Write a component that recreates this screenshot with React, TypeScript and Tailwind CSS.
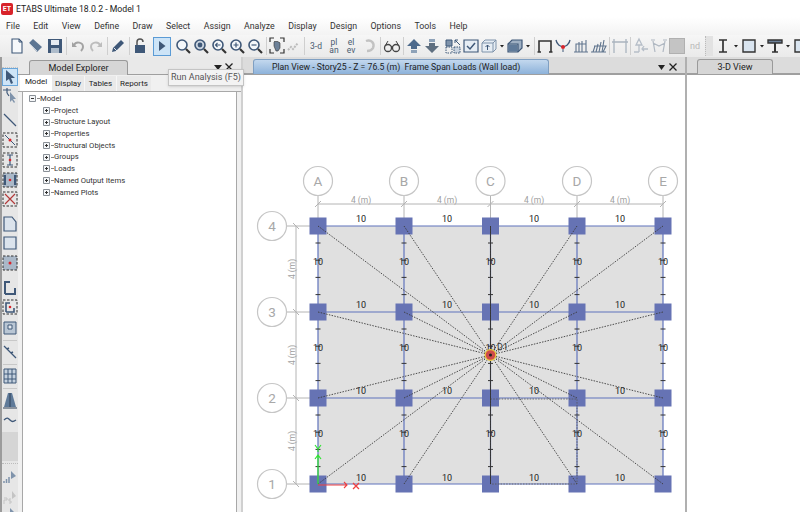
import type { ReactNode } from 'react'

const menus = ['File', 'Edit', 'View', 'Define', 'Draw', 'Select', 'Assign', 'Analyze', 'Display', 'Design', 'Options', 'Tools', 'Help']
const treeItems = ['Project', 'Structure Layout', 'Properties', 'Structural Objects', 'Groups', 'Loads', 'Named Output Items', 'Named Plots']

const xs = [318, 404, 490.5, 577, 663]
const ys = [226, 312, 398, 484]
const cols = ['A', 'B', 'C', 'D', 'E']
const rows = ['4', '3', '2', '1']
const cx = 490.5
const cy = 355

const navy = '#3f5878'
const mid = '#7f93ab'
const light = '#c9d3df'
const dim = '#b4b4b4'

const Ico = ({ w = 18, children }: { w?: number; children: ReactNode }) => (
  <svg width={w} height="18" viewBox={`0 0 ${w} 18`} className="shrink-0" fill="none">
    {children}
  </svg>
)

const Sep = ({ w, line = true }: { w: number; line?: boolean }) => (
  <div className="h-[18px] shrink-0 flex justify-center" style={{ width: w }}>
    {line && <div className="w-px h-full bg-[#cfcfcf]" />}
  </div>
)

const Drop = () => (
  <Ico w={8}>
    <path d="M2 8h4l-2 2.5z" fill="#222" />
  </Ico>
)

const Zoom = ({ sign }: { sign?: string }) => (
  <Ico>
    <circle cx="8" cy="8" r="5" stroke={navy} strokeWidth="1.6" fill={sign === 'w' ? light : '#f4f7fa'} />
    <path d="M12 12l4 4" stroke="#333" strokeWidth="2.2" />
    {sign === '+' && <path d="M5.5 8h5M8 5.5v5" stroke={navy} strokeWidth="1.2" />}
    {sign === '-' && <path d="M5.5 8h5" stroke={navy} strokeWidth="1.2" />}
    {sign === 'b' && <path d="M10.5 8h-5M7.5 6l-2 2 2 2" stroke={navy} strokeWidth="1.1" />}
    {sign === 'w' && <circle cx="8" cy="8" r="2.4" fill={navy} />}
  </Ico>
)

const CloseX = () => (
  <svg width="8" height="8" viewBox="0 0 8 8">
    <path d="M.5.5l7 7M7.500.5l-7 7" stroke="#222" strokeWidth="1.300" />
  </svg>
)

const TextIcon = ({ t, w = 18 }: { t: string; w?: number }) => (
  <div className="h-[18px] shrink-0 flex items-center justify-center text-[8.500px] leading-[8px] text-center text-[#4a5b70]" style={{ width: w }}>
    {t}
  </div>
)

const TopToolbar = () => (
  <div className="h-[22px] flex items-center pl-[8px] bg-gradient-to-b from-[#f6f6f6] to-[#eaeaea] overflow-hidden">
    <Ico>
      <path d="M4 2h7l3 3v11H4z" fill="#f7f9fb" stroke={navy} strokeWidth="1.1" />
      <path d="M11 2v3h3" stroke={navy} />
    </Ico>
    <Ico>
      <path d="M3 6l4-4 9 8-5 5z" fill="#5d7693" />
      <path d="M3 6l8 8" stroke="#c5d0dc" />
    </Ico>
    <Sep w={2} line={false} />
    <Ico>
      <path d="M2 2h14v14H2z" fill={navy} />
      <path d="M5 3h8v5H5z" fill="#e6ebf1" />
      <path d="M5 11h8v5H5z" fill="#aebccb" />
    </Ico>
    <Sep w={5} />
    <Ico>
      <path d="M5 8c2-4 9-3 9 2 0 2-1 3-2 4" stroke="#a3a3a3" strokeWidth="2" />
      <path d="M3 5v5h5z" fill="#a3a3a3" />
    </Ico>
    <Ico>
      <path d="M13 8c-2-4-9-3-9 2 0 2 1 3 2 4" stroke="#bdbdbd" strokeWidth="2" />
      <path d="M15 5v5h-5z" fill="#bdbdbd" />
    </Ico>
    <Sep w={4} />
    <Ico>
      <path d="M3 15l1-4 8-8 3 3-8 8z" fill={navy} />
      <path d="M5 11l3 3" stroke="#dfe5ec" />
    </Ico>
    <Sep w={4} />
    <Ico>
      <path d="M6 8V5a3 3 0 0 1 6 0" stroke="#555" strokeWidth="1.5" />
      <path d="M4 8h10v8H4z" fill={navy} />
    </Ico>
    <Sep w={4} line={false} />
    <div className="w-[18px] h-[19px] shrink-0 bg-[#cde4f7] border border-[#5b9bd5] flex items-center justify-center">
      <svg width="8" height="10" viewBox="0 0 8 10">
        <path d="M1 0l6.500 5L1 10z" fill="#3f5878" />
      </svg>
    </div>
    <Sep w={3} line={false} />
    <Zoom sign="z" />
    <Zoom sign="w" />
    <Zoom sign="b" />
    <Zoom sign="+" />
    <Zoom sign="-" />
    <Sep w={5} />
    <Ico w={16}>
      <path d="M1 5V1h4M11 1h4v4M1 12v4h4M15 12v4h-4" stroke="#333" strokeWidth="1.2" />
      <path d="M5 9V5l1-1 1 1 1-1 1 1 1 0 1 1v5l-2 3H7z" fill="#6d8198" stroke="#333" strokeWidth=".6" />
    </Ico>
    <Ico w={16}>
      <path d="M3 13l3-3 2 2 5-6" stroke="#bbb" strokeWidth="2" strokeDasharray="2 1" />
    </Ico>
    <Sep w={6} />
    <TextIcon t="3-d" />
    <div className="w-[2px] shrink-0" />
    <TextIcon t="pl an" w={14} />
    <div className="w-[3px] shrink-0" />
    <TextIcon t="el ev" w={14} />
    <div className="w-[2px] shrink-0" />
    <Ico>
      <path d="M6 4c5-2 9 2 7 7-1 2-3 3-6 3" stroke="#c2c2c2" strokeWidth="2.4" />
    </Ico>
    <Sep w={5} />
    <Ico>
      <circle cx="5" cy="11" r="3.500" stroke="#444" strokeWidth="1.3" />
      <circle cx="13" cy="11" r="3.500" stroke="#444" strokeWidth="1.3" />
      <path d="M8 10c1-1 1-1 2 0M2 9l3-5M16 9l-3-5" stroke="#444" />
    </Ico>
    <Sep w={4} />
    <Ico>
      <path d="M9 2l7 7h-4v3H6V9H2z" fill="#4d6a8c" />
      <path d="M6 13h6v3H6z" fill="#8ea2b8" />
    </Ico>
    <Ico>
      <path d="M9 16l7-7h-4V6H6v3H2z" fill="#5f6f80" />
      <path d="M6 2h6v3H6z" fill="#8ea2b8" />
    </Ico>
    <Sep w={3} line={false} />
    <Ico>
      <path d="M2 3h6v6H2z" fill={mid} stroke={navy} />
      <path d="M10 10h6v6h-6z" fill={light} stroke={navy} strokeDasharray="1.500 1" />
      <path d="M2 10h6v6H2z" stroke={navy} strokeDasharray="1.500 1" />
      <path d="M11 3l5 5M11 3h3M11 3v3" stroke={navy} />
    </Ico>
    <Ico>
      <path d="M2 3h14v12H2z" fill="#e6edf4" stroke={navy} strokeWidth="1.200" />
      <path d="M5 9l3 3 5-6" stroke={navy} strokeWidth="1.500" />
    </Ico>
    <Ico>
      <path d="M2 6l3-3h11v9l-3 3H2z" fill="#e6edf4" stroke={mid} />
      <path d="M2 6h11v9M13 6l3-3" stroke={mid} />
      <path d="M7.500 13V8M5.500 10l2-2 2 2" stroke={navy} />
    </Ico>
    <Drop />
    <Ico>
      <path d="M2 7l4-4h10v8l-4 4H2z" fill="#9fb0c3" stroke={navy} strokeWidth="1.200" />
      <path d="M2 7h10v8" stroke={navy} strokeWidth="1.200" />
      <path d="M3 8h8v6H3z" fill="#5f7a99" />
    </Ico>
    <Drop />
    <Sep w={4} />
    <Ico>
      <path d="M3 15V4h12v11M1.500 15H5M13 15h3.500" stroke="#333" strokeWidth="1.600" />
    </Ico>
    <Ico>
      <path d="M2 3c1 5 4 6 7 7 3-1 6-2 7-7" stroke={navy} strokeWidth="1.300" />
      <circle cx="9" cy="10" r="2" fill="#d8232a" />
      <path d="M9 12v3" stroke={navy} />
    </Ico>
    <Ico>
      <path d="M2 15h14M4 15V7h10v8M7 15V5M10 15V4M14 15V3" stroke="#60758e" strokeWidth="1.100" />
    </Ico>
    <Ico>
      <path d="M1 15h15M3 15l2-6M6 15l2-8M9 15l2-10M12 15l2-12M4 9h12l-3 6" stroke="#60758e" strokeWidth="1.100" />
    </Ico>
    <Sep w={3} />
    <Ico>
      <path d="M3 16V5h12v11M3 2v5M15 2v5M1 5h16" stroke="#aab4bf" strokeWidth="1.300" />
    </Ico>
    <Sep w={3} />
    <Ico>
      <path d="M7 2l3 6H4zM7 8v7M2 15h5M11 12h5M12 9l-2 3 2 2" stroke="#b6bec8" strokeWidth="1.300" />
    </Ico>
    <Ico>
      <path d="M3 4l2 11M15 4l-2 11M3 6l6 3 6-3M1 3h4M13 3h4" stroke="#b0b8c2" strokeWidth="1.200" />
    </Ico>
    <div className="w-[16px] h-[16px] mx-px shrink-0 bg-[#c4c4c4] border border-[#b0b0b0]" />
    <div className="w-[18px] h-[18px] shrink-0 text-center text-[9px] leading-[18px] text-[#b8b8b8]">nd</div>
    <div className="w-[8px] h-[20px] shrink-0 mx-[1px] bg-[#e2e2e2] border-l border-dotted border-[#bbb]" />
    <Ico>
      <path d="M5 3h8M5 15h8M9 3v12" stroke="#333" strokeWidth="1.700" />
    </Ico>
    <Drop />
    <Ico>
      <path d="M3 3h12v12H3z" fill="#d9e4ef" stroke="#333" strokeWidth="1.400" />
    </Ico>
    <Drop />
    <Ico>
      <path d="M2 3h14v3H2zM6 15h6" stroke="#333" strokeWidth="1.400" fill="#6d8198" />
      <path d="M9 6v9" stroke="#333" strokeWidth="2" />
    </Ico>
    <Drop />
    <Ico>
      <path d="M3 3h12v12H3z" fill="#d9e4ef" stroke="#333" strokeWidth="1.400" />
    </Ico>
  </div>
)

const Dash = 'M1 1h14v14H1z'

const LeftToolbar = () => (
  <div className="w-[18px] shrink-0 flex flex-col items-center bg-[#e6e6e6] border-l-2 border-[#9b9b9b] pt-[1px] overflow-hidden">
    <div className="w-full h-[10px] shrink-0 border-b border-dotted border-[#c4c4c4]" />
    <div className="w-full h-[18px] shrink-0 bg-[#cde4f7] border border-[#6aa6da] flex items-center justify-center">
      <svg width="12" height="14" viewBox="0 0 12 14">
        <path d="M2 0v11l3-2 2 5 2-1-2-5h4z" fill={navy} />
      </svg>
    </div>
    <svg width="16" height="18" viewBox="0 0 16 18" className="shrink-0 mb-[8px]">
      <path d="M1 4h8M5 2v5M5 7l2 3" stroke={navy} strokeWidth="1.200" />
      <path d="M8 6v10l2-2 2 3 1-1-2-3h3z" fill="#7f93ab" />
    </svg>
    <svg width="16" height="16" viewBox="0 0 16 16" className="shrink-0 mb-[4px]">
      <path d="M2 2l12 12" stroke={navy} strokeWidth="1.300" />
    </svg>
    <svg width="16" height="16" viewBox="0 0 16 16" className="shrink-0 mb-[4px]">
      <path d={Dash} stroke="#333" strokeDasharray="2.500 1.500" fill="none" />
      <path d="M3 3l10 10" stroke={navy} />
      <circle cx="8" cy="8" r="1.500" fill="#d8232a" />
    </svg>
    <svg width="16" height="16" viewBox="0 0 16 16" className="shrink-0 mb-[4px]">
      <path d={Dash} stroke="#333" strokeDasharray="2.500 1.500" fill="none" />
      <path d="M5 3h6M5 13h6M8 3v10" stroke={navy} strokeWidth="1.200" />
      <circle cx="8" cy="8" r="1.300" fill="#d8232a" />
    </svg>
    <svg width="16" height="16" viewBox="0 0 16 16" className="shrink-0 mb-[3px]">
      <path d={Dash} stroke="#333" strokeDasharray="2.500 1.500" fill="#aab8c8" />
      <path d="M3 3v10M13 3v10" stroke={navy} strokeWidth="2" />
      <circle cx="8" cy="8" r="1.300" fill="#d8232a" />
    </svg>
    <svg width="16" height="16" viewBox="0 0 16 16" className="shrink-0 mb-[9px]">
      <path d={Dash} stroke="#333" strokeDasharray="2.500 1.500" fill="none" />
      <path d="M3 3l10 10M13 3L3 13" stroke="#b33a3a" strokeWidth="1.200" />
    </svg>
    <svg width="16" height="16" viewBox="0 0 16 16" className="shrink-0 mb-[3px]">
      <path d="M2 1h8l4 5v9H2z" fill="#dbe3ec" stroke={navy} strokeWidth="1.200" />
    </svg>
    <svg width="16" height="16" viewBox="0 0 16 16" className="shrink-0 mb-[4px]">
      <path d="M2 2h12v12H2z" fill="#dbe3ec" stroke={navy} strokeWidth="1.200" />
    </svg>
    <svg width="16" height="16" viewBox="0 0 16 16" className="shrink-0 mb-[9px]">
      <path d={Dash} stroke="#333" strokeDasharray="2.500 1.500" fill="#aab8c8" />
      <circle cx="8" cy="8" r="1.500" fill="#d8232a" />
    </svg>
    <svg width="14" height="16" viewBox="0 0 14 16" className="shrink-0 mb-[3px]">
      <path d="M2 14V2h5M2 14h10V8" stroke={navy} strokeWidth="2" fill="none" />
    </svg>
    <svg width="16" height="16" viewBox="0 0 16 16" className="shrink-0 mb-[5px]">
      <path d={Dash} stroke="#333" strokeDasharray="2.500 1.500" fill="none" />
      <path d="M4 13V4h4M4 13h8V9" stroke={navy} strokeWidth="1.600" fill="none" />
      <circle cx="8" cy="8" r="1.300" fill="#d8232a" />
    </svg>
    <svg width="14" height="16" viewBox="0 0 14 16" className="shrink-0 mb-[4px]">
      <path d="M1 2h12v12H1z" fill="#b9c6d4" stroke={navy} />
      <path d="M5 5h4v4H5z" stroke={navy} fill="#e4e9ef" />
    </svg>
    <div className="w-[14px] h-px bg-[#c8c8c8] shrink-0 mb-[3px]" />
    <svg width="16" height="16" viewBox="0 0 16 16" className="shrink-0 mb-[4px]">
      <path d="M2 2l12 12" stroke={navy} strokeWidth="1.200" />
      <path d="M5 5l2-1M9 9l2-1" stroke={navy} strokeWidth="1.600" />
    </svg>
    <div className="w-[14px] h-px bg-[#c8c8c8] shrink-0 mb-[3px]" />
    <svg width="14" height="16" viewBox="0 0 14 16" className="shrink-0 mb-[4px]">
      <path d="M1 1h12v14H1zM1 6h12M1 11h12M5 1v14M9 1v14" stroke={navy} strokeWidth="1" fill="#c5d1de" />
    </svg>
    <div className="w-[14px] h-px bg-[#c8c8c8] shrink-0 mb-[3px]" />
    <svg width="14" height="17" viewBox="0 0 14 17" className="shrink-0 mb-[7px]">
      <path d="M5 1h4l4 14H1z" fill="#5f7a99" />
      <path d="M7 1v14M0 16h14" stroke="#2f4058" />
    </svg>
    <svg width="14" height="8" viewBox="0 0 14 8" className="shrink-0 mb-[8px]">
      <path d="M1 4c3-3 4-2 6 0s3 2 6 0" stroke={navy} strokeWidth="1.300" fill="none" />
    </svg>
    <div className="w-full h-[29px] shrink-0 bg-[#d5d5d5]" />
    <div className="w-full h-[3px] shrink-0 border-b border-dotted border-[#bbb] mb-[4px]" />
    <svg width="14" height="18" viewBox="0 0 14 18" className="shrink-0 mb-[2px]">
      <path d="M8 3v8l5-3z" fill={mid} />
      <path d="M1 15v-2M3.500 15v-4M6 15V9" stroke={mid} strokeWidth="1.500" />
    </svg>
    <svg width="14" height="18" viewBox="0 0 14 18" className="shrink-0">
      <path d="M9 3v8l4-3z" fill="#c4c4c4" />
      <path d="M1 10h3v2H1v4M6 15h2v-2H6v-2h2" stroke="#c4c4c4" fill="none" />
    </svg>
    <svg width="14" height="10" viewBox="0 0 14 10" className="shrink-0">
      <path d="M7 2v8l5-3z" fill={mid} />
    </svg>
  </div>
)

const PlusBox = ({ minus }: { minus?: boolean }) => (
  <svg width="7" height="7" viewBox="0 0 7 7" className="shrink-0">
    <path d="M.5.5h6v6h-6z" fill="#f4f6f8" stroke="#8a9097" />
    <path d="M2 3.500h3" stroke="#333" />
    {!minus && <path d="M3.500 2v3" stroke="#333" />}
  </svg>
)

const ModelExplorer = () => (
  <div className="w-[223px] shrink-0 flex flex-col bg-[#f0f0f0]">
    <div className="h-[18px] flex items-end pl-[11px] pr-[8px] bg-[#e9e9e9] border-b border-[#9f9f9f] relative">
      <div className="w-[99px] h-[15px] -mb-px bg-[#d6d6d6] border border-b-0 border-[#9a9a9a] rounded-t-[3px] text-[9px] leading-[14px] text-center text-[#222]">
        Model Explorer
      </div>
      <svg width="8" height="5" viewBox="0 0 8 5" className="absolute left-[196px] top-[8px]">
        <path d="M0 0h8L4 5z" fill="#222" />
      </svg>
      <div className="absolute left-[207px] top-[6px] flex">
        <CloseX />
      </div>
    </div>
    <div className="h-[17px] flex items-end pl-[2px] text-[8px] leading-[15px] text-center text-[#222] border-b border-[#a8a8a8]">
      <div className="w-[32px] h-[17px] bg-white leading-[16px]">Model</div>
      <div className="w-[33px] h-[15px] bg-[#e9e9e9] border-r border-[#f6f6f6]">Display</div>
      <div className="w-[32px] h-[15px] bg-[#e9e9e9] border-r border-[#f6f6f6]">Tables</div>
      <div className="w-[34px] h-[15px] bg-[#e9e9e9]">Reports</div>
    </div>
    <div className="flex-1 ml-[4px] mr-[4px] bg-white border-l border-r border-[#a8a8a8] pt-[1px] pl-[6px] text-[7.700px] leading-[11.700px] text-[#333]">
      <div className="flex items-center gap-[1px] h-[11.700px]">
        <PlusBox minus />
        <div className="w-[2px] border-t border-dotted border-[#888]" />
        <span>Model</span>
      </div>
      {treeItems.map((t) => (
        <div key={t} className="flex items-center gap-[1px] h-[11.700px] pl-[14px] whitespace-nowrap">
          <PlusBox />
          <div className="w-[2px] border-t border-dotted border-[#888]" />
          <span>{t}</span>
        </div>
      ))}
    </div>
  </div>
)

const Drawing = () => {
  const ticks: ReactNode[] = []
  xs.forEach((x, i) => {
    for (let y = 243; y < 484; y += 17.2) {
      if (Math.abs(y - 312) < 10 || Math.abs(y - 398) < 10) continue
      ticks.push(<path key={`${i}-${y}`} d={`M${x - 2.500} ${y}h5`} stroke="#333" strokeWidth="1" />)
    }
  })
  const txt = 'Roboto, sans-serif'
  return (
    <svg viewBox="243 75 442 437" width="442" height="437" className="block">
      <rect x={xs[0]} y={ys[0]} width={xs[4] - xs[0]} height={ys[3] - ys[0]} fill="#e0e0e0" />
      {/* dimension lines */}
      <path d={`M${xs[0]} 204H${xs[4]}`} stroke={dim} />
      <path d={`M296 ${ys[0]}V${ys[3]}`} stroke={dim} />
      {xs.map((x, i) => (
        <g key={cols[i]}>
          <circle cx={x} cy={181} r="14.500" fill="white" stroke="#c6c6c6" strokeWidth="1.200" />
          <text x={x} y={186} textAnchor="middle" fontSize="13.500" fontFamily={txt} fill="#a8a8a8">{cols[i]}</text>
          <path d={`M${x} 196V226M${x - 3} 207l6-6`} stroke={dim} />
        </g>
      ))}
      {ys.map((y, i) => (
        <g key={rows[i]}>
          <circle cx={272} cy={y} r="14.500" fill="white" stroke="#c6c6c6" strokeWidth="1.200" />
          <text x={272} y={y + 5} textAnchor="middle" fontSize="13.500" fontFamily={txt} fill="#a8a8a8">{rows[i]}</text>
          <path d={`M287 ${y}H318M293 ${y - 3}l6 6`} stroke={dim} />
        </g>
      ))}
      {[361, 447, 534, 620].map((x) => (
        <text key={x} x={x} y={203} textAnchor="middle" fontSize="8.500" fontFamily={txt} fill="#a0a0a0">4 (m)</text>
      ))}
      {[269, 355, 441].map((y) => (
        <text key={y} textAnchor="middle" fontSize="8.500" fontFamily={txt} fill="#a0a0a0" transform={`translate(295 ${y}) rotate(-90)`}>4 (m)</text>
      ))}
      {/* beams */}
      {ys.map((y) => (
        <path key={y} d={`M${xs[0]} ${y}H${xs[4]}`} stroke="#5f72bb" strokeWidth="1.200" />
      ))}
      {xs.map((x) => (
        <path key={x} d={`M${x} ${ys[0]}V${ys[3]}`} stroke="#5f72bb" strokeWidth="1.200" />
      ))}
      {ticks}
      {/* columns */}
      {xs.map((x) =>
        ys.map((y) => <rect key={`${x}-${y}`} x={x - 8.500} y={y - 8.500} width="17" height="17" fill="#6673b4" />),
      )}
      {/* wall load lines meeting at the centre point */}
      {xs.map((x) =>
        ys.map((y) => (
          <path key={`${x}:${y}`} d={`M${x} ${y}L${cx} ${cy}`} stroke="#3a3a3a" strokeWidth="0.900" strokeDasharray="1.500 1.300" />
        )),
      )}
      <path d={`M${cx} 399H${xs[3]}V484H${cx}`} stroke="#555" strokeWidth="0.800" strokeDasharray="1.500 1.300" fill="none" />
      <path d={`M${xs[2]} ${ys[0]}V${ys[3]}`} stroke="#333" strokeWidth="0.900" />
      {/* load values */}
      {[219, 305, 391, 478].map((y) =>
        [361, 447, 534, 620].map((x) => (
          <text key={`${x}/${y}`} x={x} y={y + 3} textAnchor="middle" fontSize="9" fontFamily={txt} fill="#222">10</text>
        )),
      )}
      {[262, 348, 434].map((y) =>
        xs.map((x) => (
          <text key={`${x}|${y}`} x={x} y={y + 3} textAnchor="middle" fontSize="9" fontFamily={txt} fill="#222">10</text>
        )),
      )}
      {/* point load */}
      <text x={497} y={350} fontSize="9" fontFamily={txt} fill="#333">D1</text>
      <circle cx={cx} cy={cy} r="6" fill="#e8c93c" />
      <circle cx={cx} cy={cy} r="4.800" fill="#cf4a4a" />
      <circle cx={cx} cy={cy} r="1.500" fill="#222" />
      {/* axes */}
      <path d="M318 484V455M315 459l3-4 3 4" stroke="#2ee52e" strokeWidth="1.200" fill="none" />
      <path d="M315 445l3 4 3-4M318 449v3" stroke="#2ee52e" strokeWidth="1.100" fill="none" />
      <path d="M318 485H347M344 482l3 3-3 3" stroke="#f04040" strokeWidth="1.100" fill="none" />
      <path d="M353 483l6 6M359 483l-6 6" stroke="#f04040" strokeWidth="1.300" />
    </svg>
  )
}

const PlanView = () => (
  <div className="w-[442px] shrink-0 flex flex-col bg-white">
    <div className="h-[18px] shrink-0 relative flex items-end pl-[10px] bg-[#dcdcdc] border-b-2 border-[#9f9f9f]">
      <div className="w-[296px] h-[15px] -mb-[1px] bg-gradient-to-b from-[#c3d8ee] to-[#8db2da] border border-b-0 border-[#7f9fc2] rounded-t-[3px] pl-[18px] text-[8.700px] leading-[14px] text-[#222] whitespace-nowrap">
        Plan View - Story25 - Z = 76.5 (m)&nbsp; Frame Span Loads (Wall load)
      </div>
      <svg width="7" height="5" viewBox="0 0 7 5" className="absolute left-[415px] top-[8px]">
        <path d="M0 0h7L3.500 5z" fill="#222" />
      </svg>
      <div className="absolute left-[426px] top-[6px] flex">
        <CloseX />
      </div>
    </div>
    <Drawing />
  </div>
)

const App = () => (
  <div className="w-[800px] h-[512px] overflow-hidden relative bg-white font-['Roboto',sans-serif] text-[#222]">
    {/* title bar */}
    <div className="h-[17px] flex items-center pl-[1px] gap-[3px] bg-white">
      <div className="w-[12px] h-[12px] rounded-[2px] bg-[#d8232a] text-white text-[7px] leading-[12px] font-bold text-center">ET</div>
      <span className="text-[8.700px] leading-[14px] text-[#222]">ETABS Ultimate 18.0.2 - Model 1</span>
    </div>
    {/* menu bar */}
    <div className="h-[18px] flex items-center pt-[2px] pl-[6px] gap-[13.500px] bg-gradient-to-b from-white to-[#f3f3f3] text-[8.800px] text-[#333]">
      {menus.map((m) => (
        <span key={m}>{m}</span>
      ))}
    </div>
    <TopToolbar />
    <div className="h-[455px] flex bg-[#e4e4e4]">
      <LeftToolbar />
      <ModelExplorer />
      <div className="w-[2px] shrink-0 bg-[#d0d0d0]" />
      <PlanView />
      <div className="w-[2px] shrink-0 bg-[#b0b0b0]" />
      <div className="flex-1 flex flex-col bg-white">
        <div className="h-[18px] flex items-end pl-[10px] bg-[#dcdcdc] border-b-2 border-[#9f9f9f]">
          <div className="w-[76px] h-[15px] -mb-[1px] bg-[#d6d6d6] border border-b-0 border-[#9a9a9a] rounded-t-[3px] text-[9px] leading-[14px] text-center">3-D View</div>
        </div>
      </div>
    </div>
    {/* tooltip */}
    <div className="absolute left-[168px] top-[69px] w-[76px] h-[17px] bg-[#f3f3f3] border border-[#c4c4c4] shadow-sm text-[9px] leading-[15px] text-center text-[#555] whitespace-nowrap">
      Run Analysis (F5)
    </div>
  </div>
)

export default App
